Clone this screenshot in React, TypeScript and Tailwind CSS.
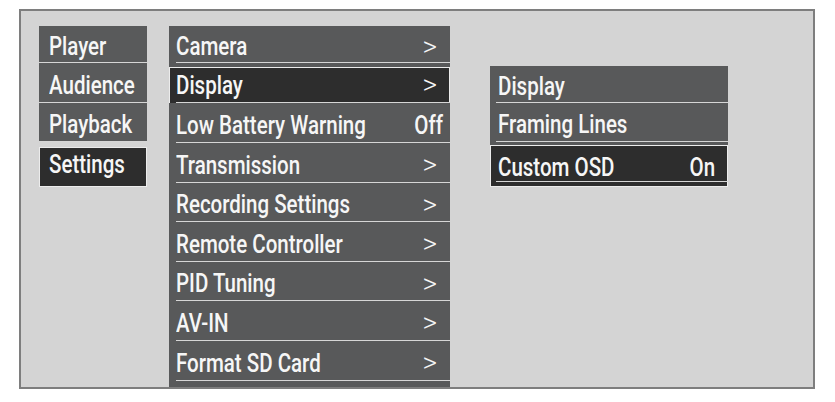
import React from 'react';

type Item = {
    label: string;
    value?: string;
    h: string;
    selected?: boolean;
};

const mainMenu: Item[] = [
    { label: 'Player', h: 'h-[37px]' },
    { label: 'Audience', h: 'h-[40px]' },
    { label: 'Playback', h: 'h-[39px]' },
    { label: 'Settings', h: 'h-[40px]', selected: true }
];

const settingsMenu: Item[] = [
    { label: 'Camera', value: '>', h: 'h-[37px]' },
    { label: 'Display', value: '>', h: 'h-[40px]', selected: true },
    { label: 'Low Battery Warning', value: 'Off', h: 'h-[40px]' },
    { label: 'Transmission', value: '>', h: 'h-[40px]' },
    { label: 'Recording Settings', value: '>', h: 'h-[39px]' },
    { label: 'Remote Controller', value: '>', h: 'h-[40px]' },
    { label: 'PID Tuning', value: '>', h: 'h-[39px]' },
    { label: 'AV-IN', value: '>', h: 'h-[40px]' },
    { label: 'Format SD Card', value: '>', h: 'h-[40px]' },
    { label: '', h: 'h-[40px]' }
];

const displayMenu: Item[] = [
    { label: 'Display', h: 'h-[37px]' },
    { label: 'Framing Lines', h: 'h-[39px]' },
    { label: 'Custom OSD', value: 'On', h: 'h-[40px]', selected: true }
];

const font = { fontFamily: 'Roboto, "Liberation Sans", sans-serif' };

// the OSD font is a narrow DIN-like face; squeeze Roboto to match
const Narrow = ({ children, right }: { children: React.ReactNode; right?: boolean }) => (
    <span className={`inline-block whitespace-nowrap scale-x-[0.82] ${right ? 'origin-right' : 'origin-left'}`}>{children}</span>
);

function MainColumn() {
    return (
        <div className="w-[108px] flex flex-col">
            {mainMenu.map((item) => (
                <div key={item.label} className={`relative ${item.h}`}>
                    {item.selected ? (
                        <div className="absolute left-0 right-0 top-[5px] -bottom-[5px] bg-[#2d2d2d] border border-[#ececec]" />
                    ) : (
                        <div className="absolute inset-0 bg-[#595a5b] border-b border-[#d6d6d6]" />
                    )}
                    <div className="relative h-full flex items-center pl-[10px] pt-[4px] text-[25px] font-medium text-[#f6f6f6]">
                        <Narrow>{item.label}</Narrow>
                    </div>
                </div>
            ))}
        </div>
    );
}

function SubColumn({
    items,
    width,
    inset,
    valuePad,
    box,
    selPad
}: {
    items: Item[];
    width: string;
    inset: string;
    valuePad: string;
    box: string;
    selPad: string;
}) {
    return (
        <div className={`${width} flex flex-col`}>
            {items.map((item, idx) => (
                <div key={idx} className={`relative ${item.h}`}>
                    <div className="absolute inset-0 bg-[#58595a]" />
                    {item.selected && <div className={`absolute left-0 right-0 ${box} bg-[#2d2d2d] border border-[#ececec]`} />}
                    <div className={`absolute ${inset} right-0 bottom-0 h-px bg-[#d6d6d6]`} />
                    <div
                        className={`relative h-full flex items-center justify-between ${item.selected ? selPad : 'pt-[4px]'} ${valuePad} text-[25px] font-medium text-[#f6f6f6]`}
                    >
                        <Narrow>{item.label}</Narrow>
                        {item.value === '>' ? (
                            <span className="mr-[3px] text-[28px] font-light">&gt;</span>
                        ) : (
                            <Narrow right>{item.value}</Narrow>
                        )}
                    </div>
                </div>
            ))}
        </div>
    );
}

export default function App() {
    return (
        <div className="w-[835px] h-[402px] bg-white pt-[9px] pl-[19px]" style={font}>
            <div className="w-[796px] h-[380px] bg-[#d4d4d4] border-2 border-[#7e7e7e] overflow-hidden flex items-start pl-[18px] pt-[15px] leading-none">
                <MainColumn />
                <div className="ml-[22px]">
                    <SubColumn
                        items={settingsMenu}
                        width="w-[281px]"
                        inset="left-[7px]"
                        valuePad="pl-[7px] pr-[10px]"
                        box="top-[4px] -bottom-[4px]"
                        selPad="pt-[4px]"
                    />
                </div>
                <div className="ml-[40px] mt-[40px]">
                    <SubColumn
                        items={displayMenu}
                        width="w-[238px]"
                        inset="left-[6px]"
                        valuePad="pl-[8px] pr-[13px]"
                        box="top-[3px] -bottom-[5px]"
                        selPad="pt-[11px]"
                    />
                </div>
            </div>
        </div>
    );
}
